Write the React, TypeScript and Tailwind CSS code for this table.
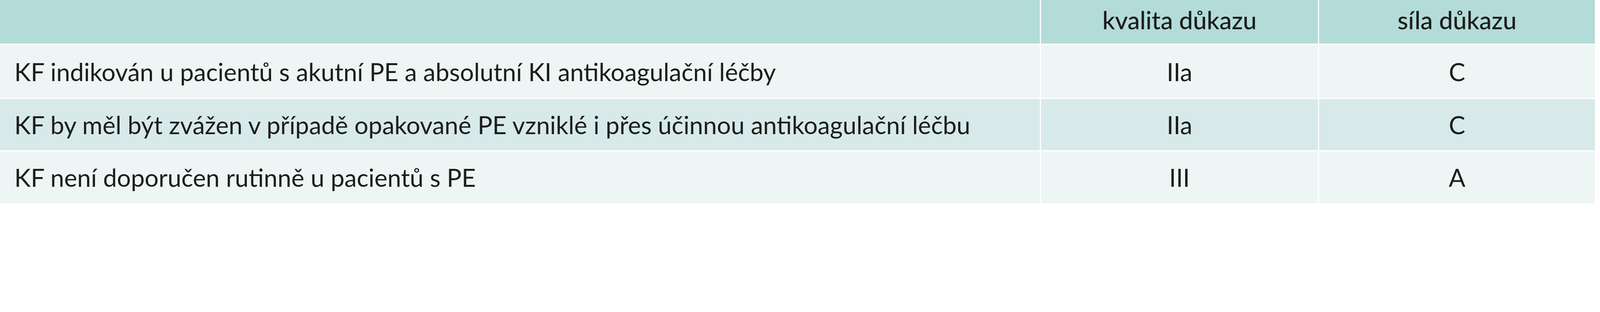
const rows = [
  {
    text: 'KF indikován u pacientů s akutní PE a absolutní KI antikoagulační léčby',
    quality: 'IIa',
    strength: 'C',
    height: 'h-[3.31vw]',
    bg: 'bg-[#edf6f5]',
  },
  {
    text: 'KF by měl být zvážen v případě opakované PE vzniklé i přes účinnou antikoagulační léčbu',
    quality: 'IIa',
    strength: 'C',
    height: 'h-[3.19vw]',
    bg: 'bg-[#d7eae9]',
  },
  {
    text: 'KF není doporučen rutinně u pacientů s PE',
    quality: 'III',
    strength: 'A',
    height: 'h-[3.23vw]',
    bg: 'bg-[#edf6f5]',
  },
];

// sizes are in vw so the table keeps the reference proportions (6198px wide frame)
export default function App() {
  return (
    <div className="w-full h-[12.9vw] bg-white font-['Lato',sans-serif] text-[1.54vw] leading-none text-[#1d1d1b]">
      <div className="w-[99.68vw] grid grid-cols-[64.99vw_17.3vw_17.23vw] gap-[0.08vw]">
        {/* Header */}
        <div className="h-[2.74vw] bg-[#b3dcd8]" />
        <div className="h-[2.74vw] bg-[#b3dcd8] flex items-center justify-center pb-[0.29vw] font-medium">
          kvalita důkazu
        </div>
        <div className="h-[2.74vw] bg-[#b3dcd8] flex items-center justify-center pb-[0.29vw] font-medium">
          síla důkazu
        </div>

        {rows.map((row) => (
          <div key={row.text} className="contents">
            <div className={`${row.height} ${row.bg} flex items-center pl-[0.9vw] whitespace-nowrap`}>
              {row.text}
            </div>
            <div className={`${row.height} ${row.bg} flex items-center justify-center`}>{row.quality}</div>
            <div className={`${row.height} ${row.bg} flex items-center justify-center`}>{row.strength}</div>
          </div>
        ))}
      </div>
    </div>
  );
}
